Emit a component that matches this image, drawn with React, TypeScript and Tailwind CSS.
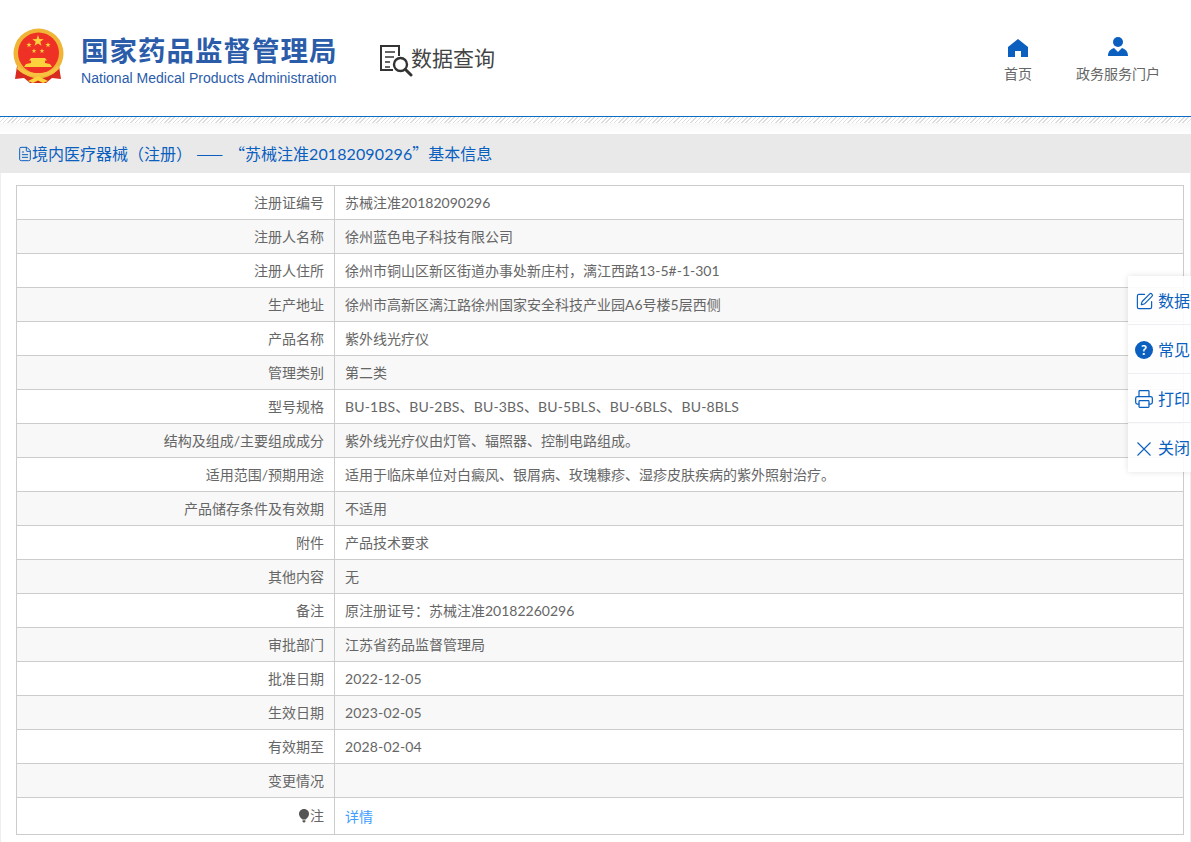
import { FileText, Printer, SquarePen } from 'lucide-react';

const rows = [
  ['注册证编号', '苏械注准20182090296'],
  ['注册人名称', '徐州蓝色电子科技有限公司'],
  ['注册人住所', '徐州市铜山区新区街道办事处新庄村，漓江西路13-5#-1-301'],
  ['生产地址', '徐州市高新区漓江路徐州国家安全科技产业园A6号楼5层西侧'],
  ['产品名称', '紫外线光疗仪'],
  ['管理类别', '第二类'],
  ['型号规格', 'BU-1BS、BU-2BS、BU-3BS、BU-5BLS、BU-6BLS、BU-8BLS'],
  ['结构及组成/主要组成成分', '紫外线光疗仪由灯管、辐照器、控制电路组成。'],
  ['适用范围/预期用途', '适用于临床单位对白癜风、银屑病、玫瑰糠疹、湿疹皮肤疾病的紫外照射治疗。'],
  ['产品储存条件及有效期', '不适用'],
  ['附件', '产品技术要求'],
  ['其他内容', '无'],
  ['备注', '原注册证号：苏械注准20182260296'],
  ['审批部门', '江苏省药品监督管理局'],
  ['批准日期', '2022-12-05'],
  ['生效日期', '2023-02-05'],
  ['有效期至', '2028-02-04'],
  ['变更情况', ''],
];

const sideItems = [
  { icon: <SquarePen className="shrink-0" size={19} strokeWidth={1.5} />, text: '数据查询' },
  {
    icon: (
      <span className="flex h-[18px] w-[18px] shrink-0 items-center justify-center rounded-full bg-[#0a5fbf] text-[13px] font-bold text-white">
        ?
      </span>
    ),
    text: '常见问题',
  },
  { icon: <Printer className="shrink-0" size={20} strokeWidth={1.5} />, text: '打印页面' },
  {
    icon: (
      <svg className="shrink-0" width="18" height="18" viewBox="0 0 18 18" fill="none" stroke="currentColor" strokeWidth="1.1">
        <path d="M2.5 2.5 L15.5 15.5 M15.5 2.5 L2.5 15.5" />
      </svg>
    ),
    text: '关闭窗口',
  },
];

function Star({ x, y, r }: { x: number; y: number; r: number }) {
  const points = Array.from({ length: 10 }, (_, i) => {
    const a = (Math.PI / 5) * i - Math.PI / 2;
    const d = i % 2 === 0 ? r : r * 0.4;
    return `${x + d * Math.cos(a)},${y + d * Math.sin(a)}`;
  }).join(' ');
  return <polygon points={points} fill="#fbd23c" />;
}

// 国徽，按参考图的比例手绘
function Emblem() {
  return (
    <svg width="52" height="56" viewBox="0 0 52 56">
      <path d="M5 38 L3 51 L12 50 L18 55 L34 55 L40 50 L49 51 L47 38 Z" fill="#d92a1f" />
      <circle cx="26.5" cy="25.5" r="25" fill="#f0b437" />
      <circle cx="26.5" cy="25" r="20.5" fill="#ee3124" />
      <Star x={26} y={13} r={6} />
      <Star x={17} y={17} r={2.8} />
      <Star x={36} y={17} r={2.8} />
      <Star x={22} y={23} r={2.6} />
      <Star x={30} y={23} r={2.6} />
      <path d="M19 30 H33 L35 32.5 H33 V35 L38 36 L40 39 H12 L14 36 L19 35 V32.5 H17 Z" fill="#fbd23c" />
      <path d="M6 37 C12 44 20 45 26 45 C32 45 40 44 46 37 L47 41 C40 48 32 48.5 26 48.5 C20 48.5 12 48 5 41 Z" fill="#f6c240" />
      <path d="M16 53 L26 48 L36 53 L31 55 L26 52.5 L21 55 Z" fill="#fbd23c" />
    </svg>
  );
}

function QueryIcon() {
  return (
    <svg width="34" height="34" viewBox="0 0 34 34" fill="none" stroke="#333" strokeWidth="2">
      <path d="M14 26 H2 V2 H20 V12" />
      <path d="M6 8 H16 M6 13 H15 M6 18 H11 M6 23 H11" strokeWidth="1.6" />
      <circle cx="21.5" cy="20.5" r="6.5" strokeWidth="2.4" />
      <path d="M26.5 25.5 L32 31" strokeWidth="3" strokeLinecap="round" />
    </svg>
  );
}

function HomeIcon() {
  return (
    <svg width="20" height="18" viewBox="0 0 20 18" fill="#0a5fbf">
      <path d="M10 0 L20 8 V18 H13 V12 H7 V18 H0 V8 Z" />
    </svg>
  );
}

function UserIcon() {
  return (
    <svg width="20" height="20" viewBox="0 0 20 20" fill="#0a5fbf">
      <circle cx="10" cy="5" r="5" />
      <path d="M0 19 C0 14 3 12 6 11 L10 15 L14 11 C17 12 20 14 20 19 Z" />
    </svg>
  );
}

function BulbIcon() {
  return (
    <svg width="12" height="14" viewBox="0 0 12 14" fill="#555">
      <path d="M6 0 C9.2 0 11 2.4 11 5 C11 7.2 9.4 8.8 7.6 10.4 H4.4 C2.6 8.8 1 7.2 1 5 C1 2.4 2.8 0 6 0 Z" />
      <path d="M4.6 11.2 H7.4 V12.4 L6.6 13.6 H5.4 L4.6 12.4 Z" />
    </svg>
  );
}

export default function App() {
  return (
    <div className="relative h-[842px] w-[1191px] overflow-hidden bg-white font-['Lato','Noto_Sans_CJK_SC',sans-serif] text-sm text-[#666]">
      <header className="flex h-[117px] items-start border-b border-[#0a6cc4]">
        <div className="ml-[12px] mt-[28px]">
          <Emblem />
        </div>
        <div className="ml-[17px] mt-[34px] w-[260px]">
          <div className="text-[27.5px] font-bold leading-[34px] tracking-[1px] whitespace-nowrap text-[#2a5caa]">
            国家药品监督管理局
          </div>
          <div className="mt-[1px] font-['Liberation_Sans',sans-serif] text-[14px] leading-[18px] tracking-[0.03px] whitespace-nowrap text-[#2a5caa]">
            National Medical Products Administration
          </div>
        </div>
        <div className="ml-[38px] mt-[44px]">
          <QueryIcon />
        </div>
        <div className="-ml-[2px] mt-[41px] text-[21px] leading-[34px] text-[#444]">数据查询</div>
        <div className="ml-auto mr-[31px] mt-[36px] flex gap-[44px]">
          <div className="flex flex-col items-center">
            <div className="flex h-[21px] items-end">
              <HomeIcon />
            </div>
            <div className="mt-[7px] leading-[20px]">首页</div>
          </div>
          <div className="flex flex-col items-center">
            <div className="flex h-[21px] items-end">
              <UserIcon />
            </div>
            <div className="mt-[7px] leading-[20px]">政务服务门户</div>
          </div>
        </div>
      </header>

      <div className="h-[17px] bg-[linear-gradient(to_bottom,#f4f4f4,#ffffff)]">
        <div className="h-[6px] bg-[repeating-linear-gradient(135deg,#dddddd_0,#dddddd_1px,#ffffff_1px,#ffffff_3px)]" />
      </div>

      <div className="flex h-[39px] items-center bg-[#e9e9e9] pl-[17px] text-base text-[#0a5fbf]">
        <FileText className="shrink-0" size={16} strokeWidth={1.5} />
        <span className="-ml-[1px] whitespace-pre">
          境内医疗器械（注册）{' '}
          <span className="font-['Noto_Sans_CJK_SC',sans-serif] tracking-[2px]">——</span>{' '}
          <span className="font-['Noto_Sans_CJK_SC',sans-serif]">“</span>苏械注准
          <span className="tracking-[0.1px]">20182090296</span>
          <span className="font-['Noto_Sans_CJK_SC',sans-serif]">”</span>基本信息
        </span>
      </div>

      <div className="h-[669px] border-x border-[#eeeeee] px-[15px] pt-[12px]">
        <table className="w-[1168px] table-fixed border-collapse border border-[#cccccc]">
          <tbody>
            {rows.map(([label, value], i) => (
              <tr key={label} className={i % 2 === 1 ? 'bg-[#f8f8f8]' : 'bg-white'}>
                <td className="h-[34px] w-[318px] border border-[#cccccc] pr-[10px] text-right">{label}</td>
                <td
                  className={`h-[34px] border border-[#cccccc] pl-[10px] ${
                    /^[A-Z0-9、-]+$/.test(value) ? 'tracking-[0.15px]' : ''
                  }`}
                >
                  {value}
                </td>
              </tr>
            ))}
            <tr>
              <td className="h-[37px] w-[318px] border border-[#cccccc] pr-[10px] pt-[2px] text-right">
                <span className="inline-flex items-center">
                  <BulbIcon />注
                </span>
              </td>
              <td className="h-[37px] border border-[#cccccc] pl-[10px] pt-[2px] text-[#409eff]">详情</td>
            </tr>
          </tbody>
        </table>
      </div>

      {/* 右侧浮动工具条，文字被窗口右缘裁掉 */}
      <div className="absolute right-0 top-[276px] w-[63px] overflow-hidden bg-white/90 text-[16px] whitespace-nowrap text-[#0a5fbf] shadow-[0_0_6px_rgba(0,0,0,0.12)]">
        {sideItems.map((item, i) => (
          <div
            key={item.text}
            className={`flex h-[49px] items-center gap-[5px] pl-[7px] pt-[2px] ${i < 3 ? 'border-b border-[#eeeef4]' : ''}`}
          >
            <div className="flex w-[18px] shrink-0 justify-center">{item.icon}</div>
            <span>{item.text}</span>
          </div>
        ))}
      </div>
    </div>
  );
}
